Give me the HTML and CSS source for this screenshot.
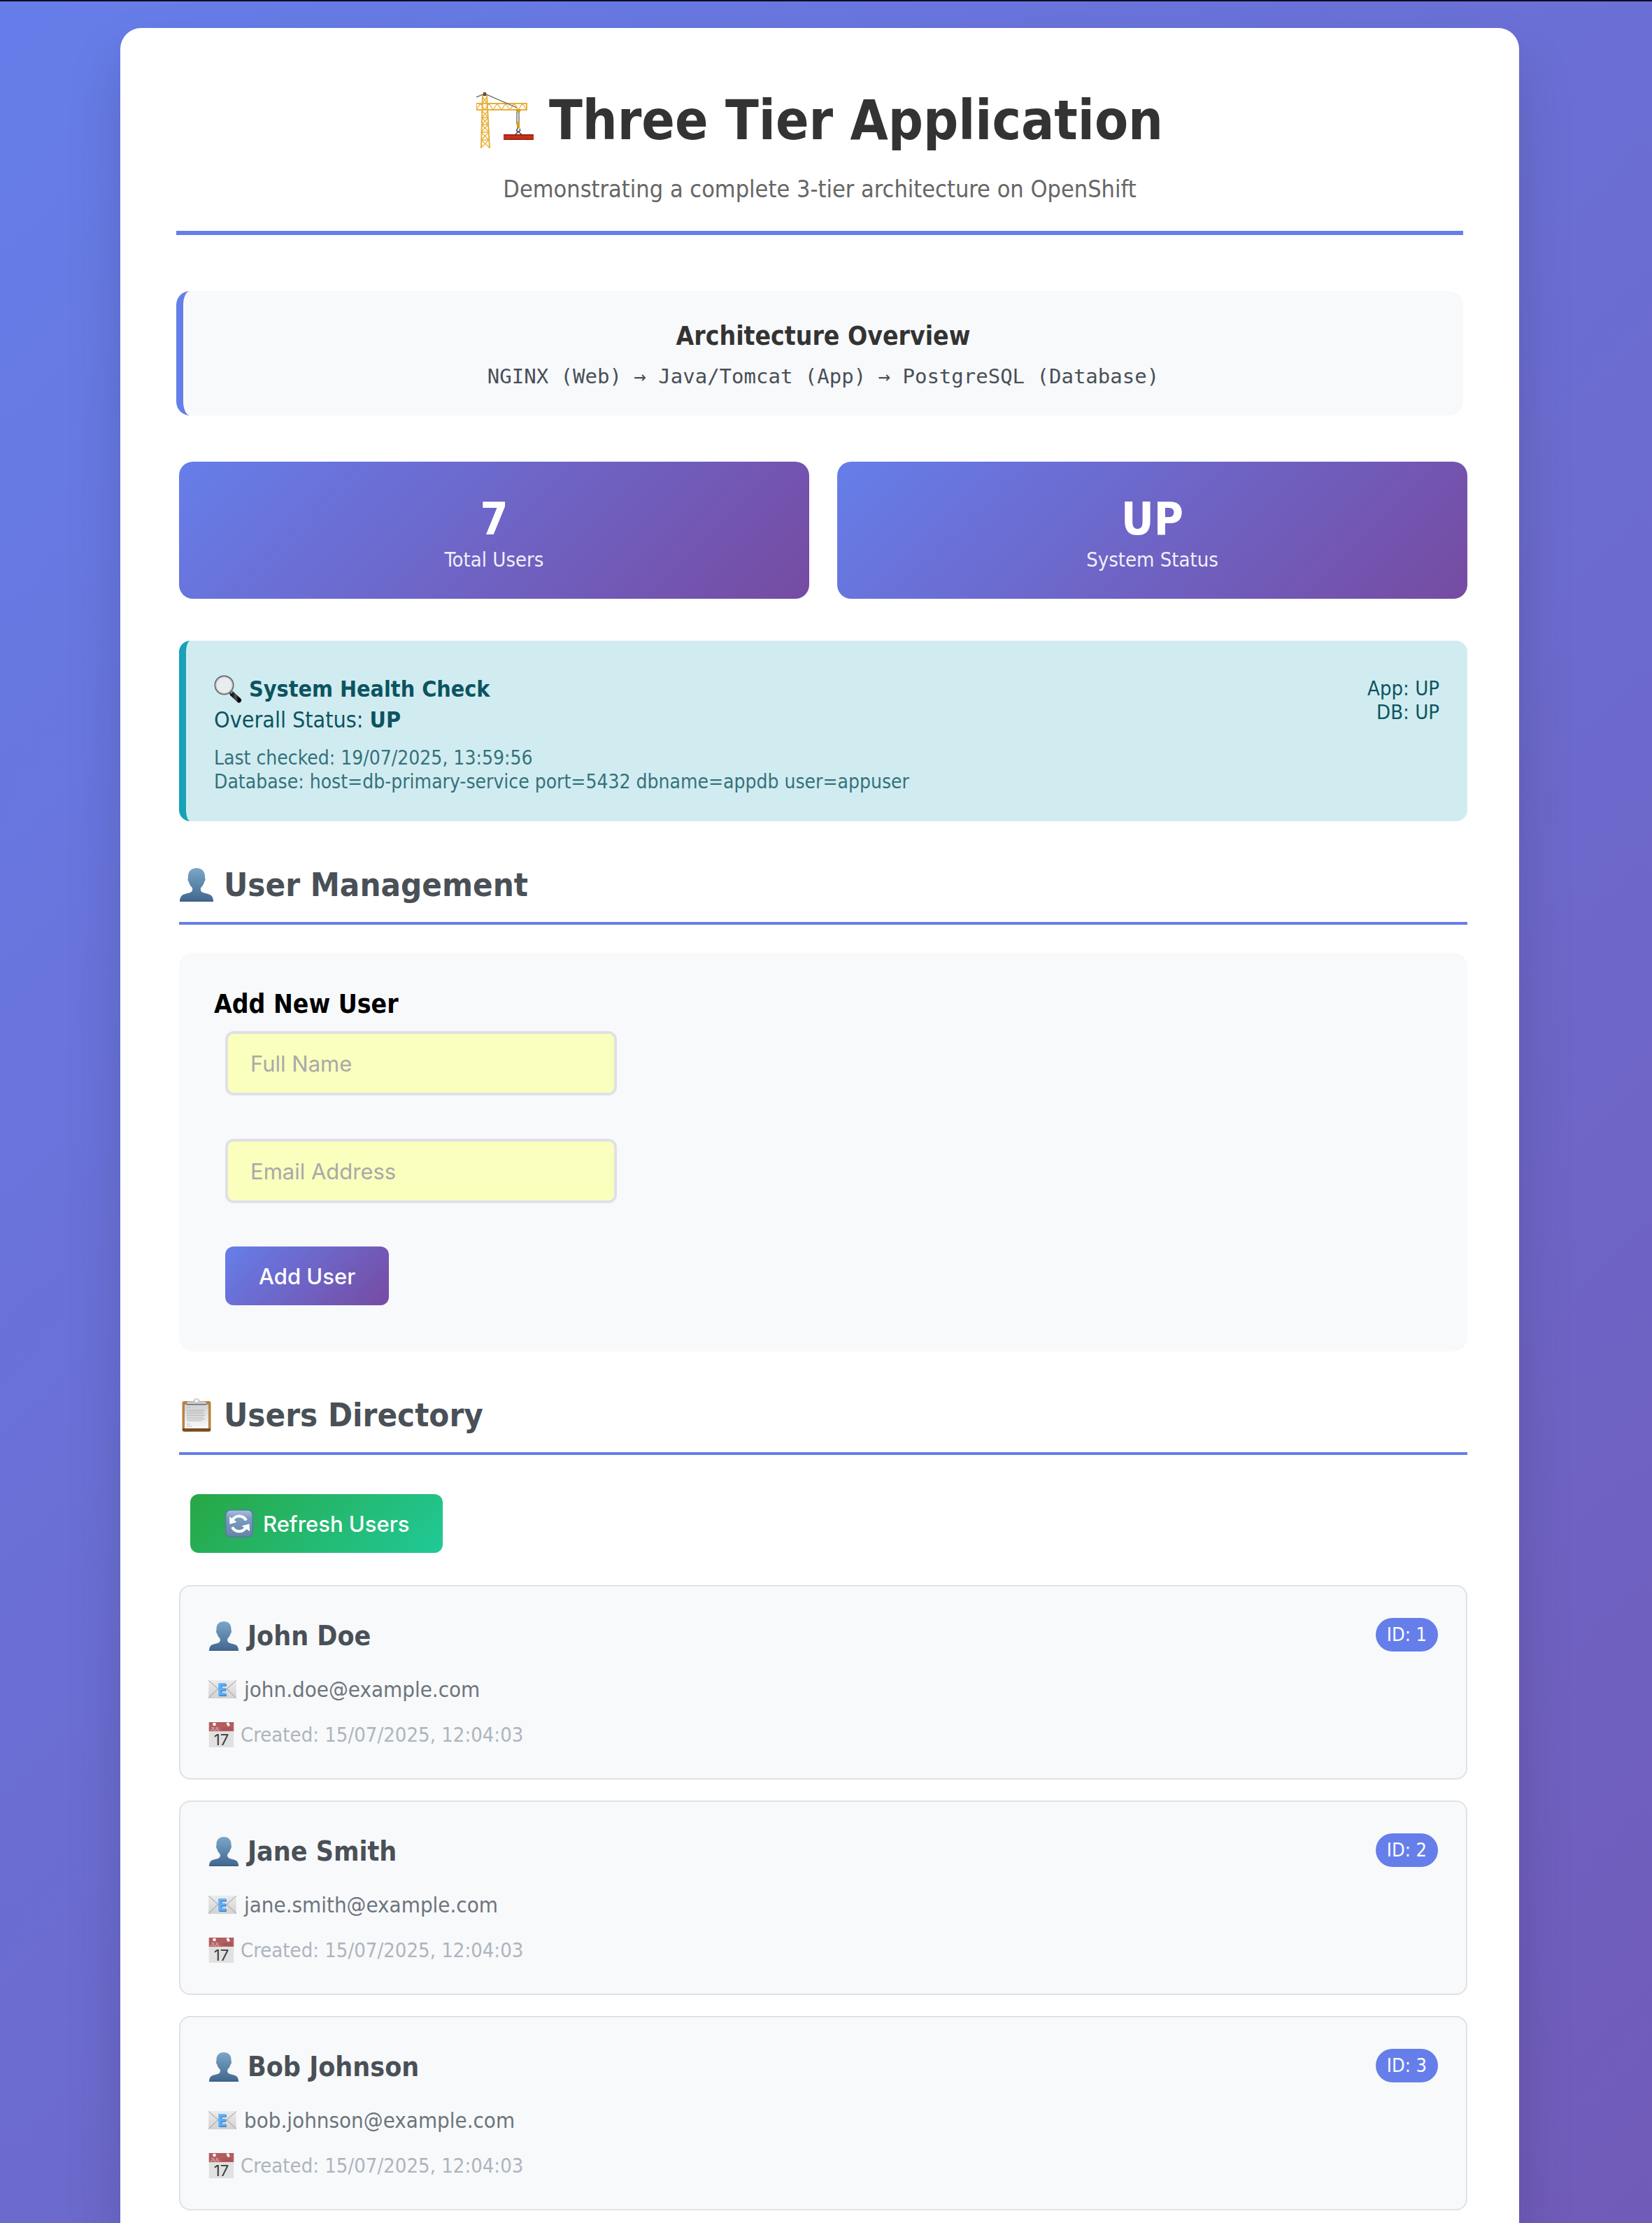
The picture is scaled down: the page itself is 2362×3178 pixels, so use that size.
FILE: index.html
```html
<!DOCTYPE html>
<html lang="en">
<head>
<meta charset="utf-8">
<meta name="viewport" content="width=device-width, initial-scale=1">
<title>Three Tier Application</title>
<link rel="stylesheet" href="styles.css">
</head>
<body>
<svg class="sprite" aria-hidden="true">
  <defs>
    <linearGradient id="g-person" x1="0" y1="0" x2="0" y2="1"><stop offset="0" stop-color="#7ba6c9"/><stop offset="1" stop-color="#41678f"/></linearGradient>
    <linearGradient id="g-paper" x1="0" y1="0" x2="0" y2="1"><stop offset="0" stop-color="#cfd0d2"/><stop offset="1" stop-color="#fafafa"/></linearGradient>
    <linearGradient id="g-tile" x1="0" y1="0" x2="0" y2="1"><stop offset="0" stop-color="#a9c1de"/><stop offset=".3" stop-color="#7c9cc2"/><stop offset="1" stop-color="#6583a8"/></linearGradient>
    <linearGradient id="g-mail" x1="0" y1="0" x2="0" y2="1"><stop offset="0" stop-color="#ececec"/><stop offset="1" stop-color="#d2d2d2"/></linearGradient>
    <linearGradient id="g-handle" x1="0" y1="0" x2="1" y2="0"><stop offset="0" stop-color="#111"/><stop offset=".5" stop-color="#555"/><stop offset="1" stop-color="#000"/></linearGradient>
  </defs>
  <symbol id="i-person" viewBox="0 0 48 48">
    <path fill="url(#g-person)" d="M24 0c8 0 12 5 12 12 0 1 0 2 .4 3 .4 1.500-.2 3.500-1.200 4.500-1 4-3 6.500-5 8.500-1 3 0 6 3 7 4 1.500 9 1.500 12 4.500 2 2 2.800 5 2.800 8H0c0-3 .8-6 2.800-8 3-3 8-3 12-4.500 3-1 4-4 3-7-2-2-4-4.500-5-8.500-1-1-1.600-3-1.200-4.500.4-1 .4-2 .4-3 0-7 4-12 12-12z"/>
    <path fill="#3a5d85" d="M0 46.500h48V48H0z"/>
  </symbol>
  <symbol id="i-crane" viewBox="0 0 82 80">
    <g fill="none" stroke="#e8b03a" stroke-width="1.300">
      <path stroke-width="2" d="M7 80 9 4h6l4 76M0 16h72v9H0z"/>
      <path d="m8 26 9 10-9 10 10 11-11 11 12 11M17 26 8 36l9 10-10 11 11 11L7 79M9 36h8M8 46h9M7 57h11M7 68h11"/>
      <path d="m0 25 6-9 6 9 6-9 6 9 6-9 6 9 6-9 6 9 6-9 6 9 6-9 6 9M9 15l6-8M15 15 9 7"/>
    </g>
    <path fill="#5d4a1b" d="M10 0h4v5h-4z"/>
    <path fill="none" stroke="#5f5f5a" stroke-width="1.300" d="M0 7 12 2l46 20M58 28v18M61 28v18"/>
    <path fill="#d79b1e" d="M56 24h8l-2 5h-4zM58 42h4v9h-4z"/>
    <path fill="none" stroke="#444" stroke-width="1.500" d="M60 51c-3 2-3 5 0 5s3-2 2-4M60 56 49 68M60 56l13 12"/>
    <path fill="#c9301a" d="M39 60h43v8H39z"/><path fill="#8f1d10" d="M39 60h43v1.500H39zM39 66.500h43V68H39z"/>
  </symbol>
  <symbol id="i-lens" viewBox="0 0 40 40">
    <path stroke="url(#g-handle)" stroke-width="7" stroke-linecap="round" d="m26 27 9.500 9"/>
    <path stroke="#8a8d90" stroke-width="3" d="m22 22 4 4"/>
    <circle cx="14.500" cy="14.500" r="13" fill="#e9edef" stroke="#63686b" stroke-width="2"/>
    <circle cx="14.500" cy="14.500" r="11.500" fill="none" stroke="#c9ced1" stroke-width="1.500"/>
  </symbol>
  <symbol id="i-clipboard" viewBox="0 0 48 48">
    <rect x="3.500" y="4" width="41" height="43.500" rx="3" fill="#b98243"/>
    <path fill="#7a4b22" d="M4 43h40v2.500a2 2 0 0 1-2 2H6a2 2 0 0 1-2-2z"/>
    <path fill="url(#g-paper)" d="M7 9h34v34H7z"/>
    <path stroke="#bdbdbd" d="M10 13h5M10 37h5M10 40h8"/>
    <path stroke="#b3b3b3" stroke-width="1.200" d="M10 17h25M10 19.500h24M10 22h25M10 24.500h26M10 27h24M10 29.500h26M10 32h22"/>
    <path fill="#c9ccd0" d="M10 7q0-2.500 3-2.500h6q1-4.500 5-4.500t5 4.500h6q3 0 3 2.500v2H10z"/>
    <path fill="#6b6d70" d="M10 8h28v1.500H10z"/><circle cx="24" cy="3.500" r="2" fill="#fff"/>
  </symbol>
  <symbol id="i-refresh" viewBox="0 0 40 40">
    <rect x=".7" y=".7" width="38.600" height="38.600" rx="7" fill="url(#g-tile)" stroke="#57779f" stroke-width="1.400"/>
    <path fill="none" stroke="#fff" stroke-width="4" d="M9.500 16.500C12 11 17 9 21 9.500c4 .3 7 2.500 9 6M30.500 24c-2.500 5-6.500 7.500-11 7.300-4-.2-7.500-2.300-9.500-6"/>
    <path fill="#fff" d="m6 10 .5 11 10-3zM34.500 20.500 35 31l-11.500-7.500z"/>
  </symbol>
  <symbol id="i-mail" viewBox="0 0 38 25">
    <path fill="url(#g-mail)" d="M0 0h38v25H0z"/>
    <path fill="none" stroke="#a9a9a9" d="m0 .5 15 13q4 3 8 0L38 .5M0 24.500 13 12M38 24.500 25 12"/>
    <path fill="#3679b8" d="M14.500 5h10v3.500h-6v3h5.500V15h-5.500v3.500h6V22h-10z"/>
    <path fill="#5aaeff" d="M13.500 4h10v3.500h-6v3H23V14h-5.500v3.500h6V21h-10z"/>
  </symbol>
  <symbol id="i-calendar" viewBox="0 0 36 36">
    <path fill="#e1e1e1" d="M0 0h36v36H0z"/><path fill="#b25d5f" d="M0 0h36v13H0z"/>
    <circle cx="8" cy="3" r="2.300" fill="#fff"/><path fill="#fff" d="M25 1.500 28 0l2 3.500a2 2 0 0 1-3 2z"/>
    <path stroke="#9d5052" stroke-width="1" d="M20 8.500h13M20 10.500h13"/>
  </symbol>
</svg>

<div class="container">
  <header class="header">
    <h1><svg class="icon icon-crane" aria-hidden="true"><use href="#i-crane"/></svg>Three Tier Application</h1>
    <p>Demonstrating a complete 3-tier architecture on OpenShift</p>
  </header>

  <section class="architecture">
    <h3>Architecture Overview</h3>
    <p>NGINX (Web) → Java/Tomcat (App) → PostgreSQL (Database)</p>
  </section>

  <main class="content">
    <div class="stats">
      <div class="stat-card"><div class="stat-number">7</div><div class="stat-label">Total Users</div></div>
      <div class="stat-card"><div class="stat-number">UP</div><div class="stat-label">System Status</div></div>
    </div>

    <section class="health">
      <div>
        <div class="health-line"><svg class="icon icon-lens" aria-hidden="true"><use href="#i-lens"/></svg><strong>System Health Check</strong></div>
        <div class="health-line">Overall Status:&nbsp;<strong>UP</strong></div>
        <div class="health-detail">Last checked: 19/07/2025, 13:59:56<br>Database: host=db-primary-service port=5432 dbname=appdb user=appuser</div>
      </div>
      <div class="health-side">App: UP<br>DB: UP</div>
    </section>

    <section>
      <h2><svg class="icon icon-h2" aria-hidden="true"><use href="#i-person"/></svg>User Management</h2>
      <form class="user-form">
        <h3>Add New User</h3>
        <div class="fields">
          <input type="text" placeholder="Full Name" aria-label="Full Name">
          <input type="email" placeholder="Email Address" aria-label="Email Address">
          <button class="btn" type="button">Add User</button>
        </div>
      </form>
    </section>

    <section>
      <h2><svg class="icon icon-h2" aria-hidden="true"><use href="#i-clipboard"/></svg>Users Directory</h2>
      <button class="btn btn-refresh" type="button"><svg class="icon icon-refresh" aria-hidden="true"><use href="#i-refresh"/></svg>Refresh Users</button>
      <div class="users">
        <article class="user-card">
          <div class="user-top"><h3><svg class="icon icon-person" aria-hidden="true"><use href="#i-person"/></svg>John Doe</h3><span class="badge">ID: 1</span></div>
          <div class="user-email"><svg class="icon icon-mail" aria-hidden="true"><use href="#i-mail"/></svg>john.doe@example.com</div>
          <div class="user-created"><svg class="icon icon-calendar" viewBox="0 0 36 36" aria-hidden="true"><use href="#i-calendar"/><text class="cal-month" x="2" y="12">JUL</text><text class="cal-day" x="18" y="33">17</text></svg>Created: 15/07/2025, 12:04:03</div>
        </article>
        <article class="user-card">
          <div class="user-top"><h3><svg class="icon icon-person" aria-hidden="true"><use href="#i-person"/></svg>Jane Smith</h3><span class="badge">ID: 2</span></div>
          <div class="user-email"><svg class="icon icon-mail" aria-hidden="true"><use href="#i-mail"/></svg>jane.smith@example.com</div>
          <div class="user-created"><svg class="icon icon-calendar" viewBox="0 0 36 36" aria-hidden="true"><use href="#i-calendar"/><text class="cal-month" x="2" y="12">JUL</text><text class="cal-day" x="18" y="33">17</text></svg>Created: 15/07/2025, 12:04:03</div>
        </article>
        <article class="user-card">
          <div class="user-top"><h3><svg class="icon icon-person" aria-hidden="true"><use href="#i-person"/></svg>Bob Johnson</h3><span class="badge">ID: 3</span></div>
          <div class="user-email"><svg class="icon icon-mail" aria-hidden="true"><use href="#i-mail"/></svg>bob.johnson@example.com</div>
          <div class="user-created"><svg class="icon icon-calendar" viewBox="0 0 36 36" aria-hidden="true"><use href="#i-calendar"/><text class="cal-month" x="2" y="12">JUL</text><text class="cal-day" x="18" y="33">17</text></svg>Created: 15/07/2025, 12:04:03</div>
        </article>
      </div>
    </section>
  </main>
</div>
</body>
</html>
```
FILE: styles.css
```css
* {
  box-sizing: border-box;
  margin: 0;
  padding: 0;
}

body {
  min-height: 100vh;
  padding: 38px 18px 0 0;
  border-top: 2px solid #0c0c20;
  background: linear-gradient(135deg, #667eea 0%, #764ba2 145%);
  font-family: "DejaVu Sans Condensed", "DejaVu Sans", sans-serif;
  font-size: 32px;
  color: #000;
}

.sprite {
  position: absolute;
  width: 0;
  height: 0;
}

.icon {
  flex: none;
}

.container {
  max-width: 2000px;
  margin: 0 auto;
  padding: 80px 80px 18px;
  border-radius: 30px 30px 0 0;
  background: #fff;
  box-shadow: 0 40px 80px rgba(0, 0, 0, 0.15);
}

.header {
  margin-bottom: 80px;
  padding-bottom: 34px;
  border-bottom: 6px solid #667eea;
  text-align: center;
}

.header h1 {
  display: flex;
  justify-content: center;
  align-items: center;
  gap: 22px;
  margin-bottom: 20px;
  font-size: 78px;
  line-height: 104px;
  color: #333;
}

.header p {
  font-size: 34px;
  line-height: 52px;
  color: #666;
}

.icon-crane {
  width: 82px;
  height: 80px;
}

.architecture {
  margin-bottom: 66px;
  padding: 40px 40px 34px;
  border-left: 10px solid #667eea;
  border-radius: 20px;
  background: #f8f9fb;
  text-align: center;
}

.architecture h3 {
  margin-bottom: 10px;
  font-size: 37px;
  line-height: 50px;
  color: #333;
}

.architecture p {
  font-family: "DejaVu Sans Mono", monospace;
  font-size: 29px;
  line-height: 44px;
  color: #495057;
}

.content {
  margin: 0 -6px 0 4px;
}

.stats {
  display: grid;
  grid-template-columns: 1fr 1fr;
  gap: 40px;
  margin-bottom: 60px;
}

.stat-card {
  padding: 40px;
  border-radius: 20px;
  background: linear-gradient(135deg, #667eea, #764ba2);
  color: #fff;
  text-align: center;
}

.stat-number {
  font-size: 64px;
  font-weight: bold;
  line-height: 84px;
}

.stat-label {
  font-size: 29px;
  line-height: 32px;
  opacity: 0.9;
}

.health {
  display: flex;
  justify-content: space-between;
  padding: 47px 40px 39px;
  border-left: 10px solid #17a2b8;
  border-radius: 16px;
  background: #d1ecf1;
  color: #0c5460;
}

.health-line {
  display: flex;
  align-items: center;
  gap: 10px;
  line-height: 44px;
}

.health-line + .health-line {
  gap: 0;
}

.icon-lens {
  width: 40px;
  height: 40px;
}

.health-detail {
  margin-top: 16px;
  font-size: 28px;
  line-height: 34px;
  opacity: 0.8;
}

.health-side {
  padding-top: 4px;
  font-size: 29px;
  line-height: 34px;
  text-align: right;
}

h2 {
  display: flex;
  align-items: center;
  gap: 14px;
  margin-top: 60px;
  padding-bottom: 22px;
  border-bottom: 4px solid #667eea;
  font-size: 47px;
  line-height: 62px;
  color: #495057;
}

.icon-h2 {
  width: 50px;
  height: 48px;
}

.user-form {
  margin-top: 40px;
  padding: 50px 50px 66px;
  border-radius: 20px;
  background: #f8f9fb;
}

.user-form h3 {
  margin-bottom: 14px;
  font-size: 37px;
  line-height: 48px;
}

.fields {
  display: flex;
  flex-direction: column;
  align-items: flex-start;
  gap: 62px;
  padding: 0 16px;
}

.fields input {
  width: 560px;
  max-width: 100%;
  height: 92px;
  padding: 0 32px;
  border: 4px solid #e0e1e6;
  border-radius: 12px;
  background: #faffbd;
  font-family: Inter, sans-serif;
  font-size: 31px;
}

.fields input::placeholder {
  color: #a9a9a9;
  opacity: 1;
}

.btn {
  display: flex;
  align-items: center;
  gap: 12px;
  height: 84px;
  padding: 0 48px;
  border: 0;
  border-radius: 12px;
  background: linear-gradient(135deg, #667eea, #764ba2);
  font-family: Inter, sans-serif;
  font-size: 31px;
  font-weight: 500;
  color: #fff;
}

.btn-refresh {
  margin: 56px 16px 46px;
  background: linear-gradient(135deg, #28a745, #20c997);
}

.icon-refresh {
  width: 44px;
  height: 40px;
}

.users {
  display: grid;
  gap: 30px;
}

.user-card {
  padding: 45px 40px 42px;
  border: 2px solid #dfe2e6;
  border-radius: 16px;
  background: #f8f9fb;
}

.user-top {
  display: flex;
  justify-content: space-between;
  align-items: flex-start;
  margin-bottom: 28px;
}

.user-top h3 {
  display: flex;
  align-items: center;
  gap: 12px;
  font-size: 39px;
  line-height: 52px;
  color: #495057;
}

.icon-person {
  width: 44px;
  height: 42px;
}

.badge {
  padding: 0 16px;
  border-radius: 24px;
  background: #667eea;
  font-size: 27px;
  line-height: 48px;
  color: #fff;
}

.user-email {
  display: flex;
  align-items: center;
  gap: 11px;
  margin-bottom: 23px;
  font-size: 31px;
  line-height: 44px;
  color: #6c757d;
}

.icon-mail {
  width: 40px;
  height: 26px;
}

.user-created {
  display: flex;
  align-items: center;
  gap: 9px;
  font-size: 29px;
  line-height: 40px;
  color: #adb5bd;
}

.icon-calendar {
  width: 37px;
  height: 36px;
}

.cal-month {
  font-family: "Liberation Sans", sans-serif;
  font-size: 8px;
  fill: #e6c9c9;
}

.cal-day {
  font-family: Inter, sans-serif;
  font-size: 22px;
  text-anchor: middle;
  fill: #3b3b3b;
}
```
